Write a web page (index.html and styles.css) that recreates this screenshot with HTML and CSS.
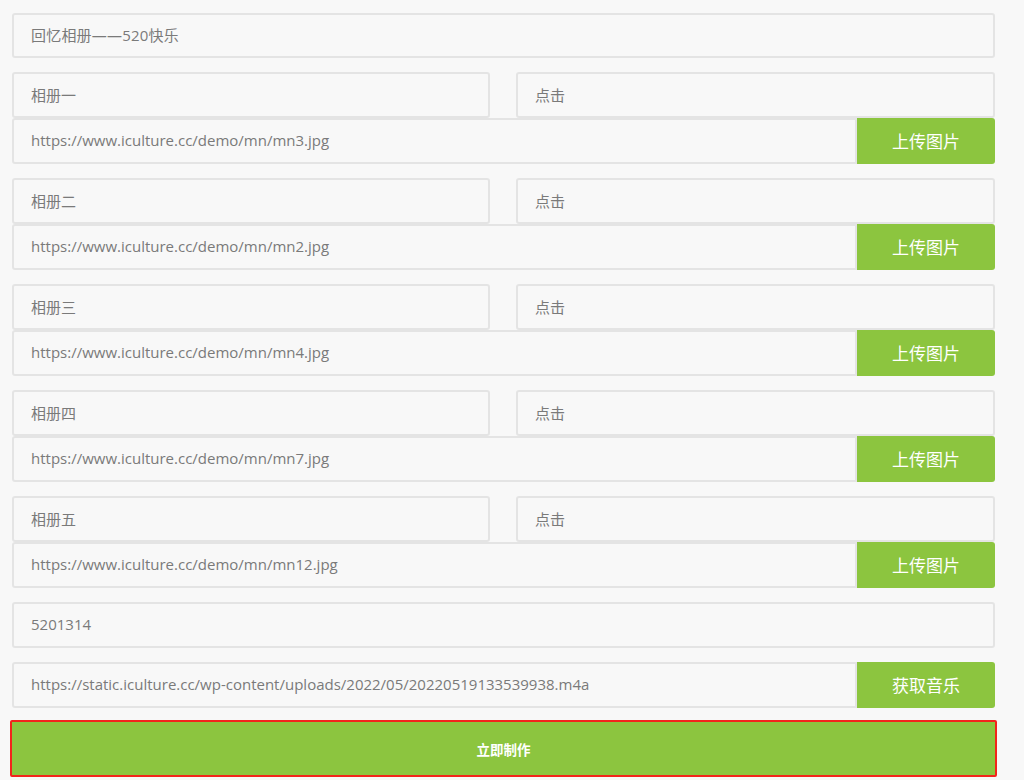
FILE: index.html
```html
<!DOCTYPE html>
<html lang="zh-CN">
<head>
<meta charset="utf-8">
<title>回忆相册</title>
<link rel="stylesheet" href="styles.css">
</head>
<body>
<form class="form">
  <div class="field title-field"><input class="input" type="text" value="回忆相册——520快乐"></div>

  <div class="group">
    <div class="pair">
      <input class="input" type="text" value="相册一">
      <input class="input" type="text" value="点击">
    </div>
    <div class="url-row">
      <input class="input url" type="text" value="https://www.iculture.cc/demo/mn/mn3.jpg">
      <button class="btn" type="button">上传图片</button>
    </div>
  </div>

  <div class="group">
    <div class="pair">
      <input class="input" type="text" value="相册二">
      <input class="input" type="text" value="点击">
    </div>
    <div class="url-row">
      <input class="input url" type="text" value="https://www.iculture.cc/demo/mn/mn2.jpg">
      <button class="btn" type="button">上传图片</button>
    </div>
  </div>

  <div class="group">
    <div class="pair">
      <input class="input" type="text" value="相册三">
      <input class="input" type="text" value="点击">
    </div>
    <div class="url-row">
      <input class="input url" type="text" value="https://www.iculture.cc/demo/mn/mn4.jpg">
      <button class="btn" type="button">上传图片</button>
    </div>
  </div>

  <div class="group">
    <div class="pair">
      <input class="input" type="text" value="相册四">
      <input class="input" type="text" value="点击">
    </div>
    <div class="url-row">
      <input class="input url" type="text" value="https://www.iculture.cc/demo/mn/mn7.jpg">
      <button class="btn" type="button">上传图片</button>
    </div>
  </div>

  <div class="group">
    <div class="pair">
      <input class="input" type="text" value="相册五">
      <input class="input" type="text" value="点击">
    </div>
    <div class="url-row">
      <input class="input url" type="text" value="https://www.iculture.cc/demo/mn/mn12.jpg">
      <button class="btn" type="button">上传图片</button>
    </div>
  </div>

  <div class="field"><input class="input" type="text" value="5201314"></div>

  <div class="url-row">
    <input class="input url" type="text" value="https://static.iculture.cc/wp-content/uploads/2022/05/20220519133539938.m4a">
    <button class="btn" type="button">获取音乐</button>
  </div>

  <button class="submit" type="button">立即制作</button>
</form>
</body>
</html>
```

FILE: styles.css
```css
* { box-sizing: border-box; }

html, body {
  margin: 0;
  padding: 0;
  background: #f8f8f8;
  font-family: "Open Sans", "Noto Sans CJK SC", sans-serif;
}

.form {
  width: 1024px;
  padding: 13px 29px 0 12px;
  display: flex;
  flex-direction: column;
  gap: 14px;
}

.field { display: flex; }

.input {
  display: block;
  width: 100%;
  height: 46px;
  margin: 0;
  padding: 0 17px 2px;
  background: #f8f8f8;
  border: 2px solid #e4e4e4;
  border-radius: 3px;
  font-family: "Open Sans", "Noto Sans CJK SC", sans-serif;
  font-size: 15px;
  color: #7a7a7a;
  outline: none;
}

.title-field .input {
  height: 45px;
  letter-spacing: 0.2px;
}

.group {
  display: flex;
  flex-direction: column;
}

.pair {
  display: grid;
  grid-template-columns: 478px 479px;
  justify-content: space-between;
}

.url-row {
  display: flex;
}

.url-row .url {
  flex: 1;
  border-radius: 3px 0 0 3px;
}

.btn {
  flex: 0 0 138px;
  height: 46px;
  margin: 0;
  padding: 0 0 2px;
  border: none;
  border-radius: 0 3px 3px 0;
  background: #8cc53f;
  color: #fff;
  font-family: "Noto Sans CJK SC", sans-serif;
  font-size: 17px;
  cursor: pointer;
}

.submit {
  width: 987px;
  height: 57px;
  margin: -2px 0 0 -2px;
  background: #8cc53f;
  border: 2px solid #f2251b;
  border-radius: 2px;
  color: #fff;
  font-family: "Noto Sans CJK SC", sans-serif;
  font-size: 13.5px;
  font-weight: bold;
  cursor: pointer;
}
```
